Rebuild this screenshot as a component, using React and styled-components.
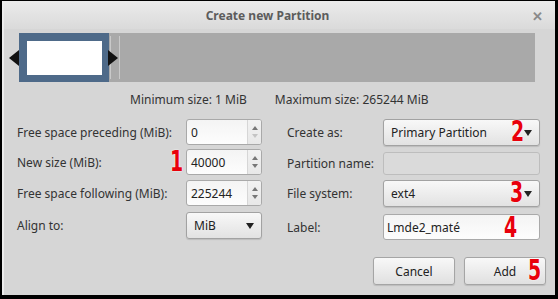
import React from "react";
import styled, { createGlobalStyle } from "styled-components";

const Global = createGlobalStyle`
  html, body { margin: 0; padding: 0; background: #000; }
  body { width: 558px; height: 299px; overflow: hidden; font-family: "Noto Sans", "Open Sans", sans-serif; }
`;

const Frame = styled.div`
  width: 558px;
  height: 299px;
  box-sizing: border-box;
  padding: 1px 3px 4px 2px;
  background: #000;
`;

const Dialog = styled.div`
  height: 100%;
  box-sizing: border-box;
  background: #d6d6d6;
  border-left: 2px solid #ececec;
  display: flex;
  flex-direction: column;
  position: relative;
`;

const TitleBar = styled.div`
  height: 28px;
  flex: none;
  box-sizing: border-box;
  padding-right: 24px;
  background: linear-gradient(#ebebeb, #dadada);
  display: flex;
  align-items: center;
  justify-content: center;
  font-size: 12px;
  font-weight: bold;
  color: #5c5c5c;
  position: relative;
`;

const Close = styled.span`
  position: absolute;
  right: 12px;
  top: 6px;
  font-size: 13px;
  color: #8a8a8a;
`;

const BarRow = styled.div`
  margin: 4px 0 0 5px;
  height: 49px;
  display: flex;
  align-items: stretch;
  position: relative;
`;

const Arrow = styled.div`
  width: 0;
  height: 0;
  align-self: center;
  border-top: 8px solid transparent;
  border-bottom: 8px solid transparent;
  ${(p) => (p.$dir === "left" ? "border-right: 10px solid #111;" : "border-left: 10px solid #111;")}
`;

const Selected = styled.div`
  width: 90px;
  box-sizing: border-box;
  background: #4e6a89;
  padding: 8px 7px 7px 8px;
  display: flex;
`;

const Inner = styled.div`
  flex: 1;
  background: #fff;
`;

const Free = styled.div`
  width: 426px;
  background: #a9a9a9;
  display: flex;
  position: relative;
`;

const Handle = styled.div`
  width: 10px;
  margin: 3px 0 3px 1px;
  border-left: 1px solid #c9c9c9;
  border-right: 1px solid #c9c9c9;
  box-sizing: border-box;
`;

const RightArrowWrap = styled.div`
  position: absolute;
  left: -1px;
  top: 0;
  bottom: 0;
  display: flex;
`;

const Sizes = styled.div`
  display: flex;
  margin: 9px 0 0 126px;
  gap: 28px;
  font-size: 12px;
  color: #333;
`;

const Form = styled.div`
  display: flex;
  margin-top: 11px;
`;

const Column = styled.div`
  display: grid;
  grid-template-columns: ${(p) => p.$cols};
  align-items: center;
  align-content: start;
  margin-left: ${(p) => p.$ml}px;
`;

const Label = styled.div`
  font-size: 12px;
  color: #333;
  margin-top: ${(p) => p.$mt || 0}px;
`;

const Cell = styled.div`
  margin-top: ${(p) => p.$mt || 0}px;
  position: relative;
`;

const Spin = styled.div`
  width: 76px;
  height: 26px;
  box-sizing: border-box;
  border: 1px solid #a9a9a9;
  border-radius: 3px;
  background: linear-gradient(#f4f4f4, #fdfdfd);
  display: flex;
  align-items: center;
  font-size: 12px;
  color: #222;
  padding-left: 4px;
`;

const SpinText = styled.span`
  flex: 1;
`;

const SpinBtns = styled.div`
  width: 13px;
  align-self: stretch;
  display: flex;
  flex-direction: column;
  align-items: center;
  justify-content: center;
  gap: 4px;
  border-left: 1px solid #d6d6d6;
  background: linear-gradient(#f2f2f2, #e8e8e8);
  border-radius: 0 2px 2px 0;
`;

const Tri = styled.div`
  width: 0;
  height: 0;
  border-left: 3px solid transparent;
  border-right: 3px solid transparent;
  ${(p) =>
    p.$up
      ? `border-bottom: 4px solid ${p.$off ? "#c4c4c4" : "#777"};`
      : `border-top: 4px solid ${p.$off ? "#c4c4c4" : "#777"};`}
`;

const Combo = styled.div`
  width: ${(p) => p.$w}px;
  height: 27px;
  box-sizing: border-box;
  border: 1px solid #a2a2a2;
  border-radius: 3px;
  background: linear-gradient(#f8f8f8, #e2e2e2);
  box-shadow: 0 1px 1px rgba(0,0,0,0.12);
  display: flex;
  align-items: center;
  padding: 0 7px 0 7px;
  font-size: 12px;
  color: #222;
`;

const ComboText = styled.span`
  flex: 1;
`;

const DownTri = styled.div`
  width: 0;
  height: 0;
  border-left: 4px solid transparent;
  border-right: 4px solid transparent;
  border-top: 6px solid #222;
`;

const Input = styled.div`
  width: 157px;
  height: ${(p) => p.$h}px;
  box-sizing: border-box;
  border: 1px solid ${(p) => (p.$disabled ? "#bdbdbd" : "#a9a9a9")};
  border-radius: 3px;
  background: ${(p) => (p.$disabled ? "#dadada" : "linear-gradient(#f4f4f4, #fdfdfd)")};
  display: flex;
  align-items: center;
  padding-left: 3px;
  font-size: 12px;
  color: #222;
`;

const Mark = styled.span`
  position: absolute;
  font-family: "DejaVu Sans Condensed", "DejaVu Sans", sans-serif;
  font-weight: bold;
  font-size: 28px;
  line-height: 1;
  color: #e8000b;
  transform: scaleX(0.75);
  transform-origin: left center;
  text-shadow: 0 0 1px #fff, 0 0 2px #fff;
  left: ${(p) => p.$x}px;
  top: ${(p) => p.$y}px;
`;

const Buttons = styled.div`
  display: flex;
  justify-content: flex-end;
  gap: 9px;
  margin: 17px 9px 0 0;
`;

const Button = styled.div`
  width: 82px;
  height: 28px;
  box-sizing: border-box;
  border: 1px solid #a5a5a5;
  border-radius: 3px;
  background: linear-gradient(#f8f8f8, #e0e0e0);
  box-shadow: 0 1px 1px rgba(0,0,0,0.12);
  display: flex;
  align-items: center;
  justify-content: center;
  font-size: 12px;
  color: #222;
  position: relative;
`;

function SpinBox({ value, upOff, downOff }) {
  return (
    <Spin>
      <SpinText>{value}</SpinText>
      <SpinBtns>
        <Tri $up $off={upOff} />
        <Tri $off={downOff} />
      </SpinBtns>
    </Spin>
  );
}

export default function App() {
  return (
    <>
      <Global />
      <Frame>
        <Dialog>
          <TitleBar>
            Create new Partition
            <Close>✕</Close>
          </TitleBar>
          <BarRow>
            <Arrow $dir="left" />
            <Selected>
              <Inner />
            </Selected>
            <Free>
              <Handle />
              <RightArrowWrap>
                <Arrow $dir="right" />
              </RightArrowWrap>
            </Free>
          </BarRow>
          <Sizes>
            <span>Minimum size: 1 MiB</span>
            <span>Maximum size: 265244 MiB</span>
          </Sizes>
          <Form>
            <Column $cols="169px 76px" $ml={13}>
              <Label>Free space preceding (MiB):</Label>
              <Cell>
                <SpinBox value="0" downOff />
              </Cell>
              <Label $mt={4}>New size (MiB):</Label>
              <Cell $mt={4}>
                <Mark $x={-16} $y={-1}>1</Mark>
                <SpinBox value="40000" />
              </Cell>
              <Label $mt={5}>Free space following (MiB):</Label>
              <Cell $mt={5}>
                <SpinBox value="225244" />
              </Cell>
              <Label $mt={6}>Align to:</Label>
              <Cell $mt={6}>
                <Combo $w={76}>
                  <ComboText>MiB</ComboText>
                  <DownTri />
                </Combo>
              </Cell>
            </Column>
            <Column $cols="96px 157px" $ml={25}>
              <Label>Create as:</Label>
              <Cell>
                <Combo $w={157}>
                  <ComboText>Primary Partition</ComboText>
                  <DownTri />
                </Combo>
                <Mark $x={128} $y={-1}>2</Mark>
              </Cell>
              <Label $mt={6}>Partition name:</Label>
              <Cell $mt={6}>
                <Input $disabled $h={23} />
              </Cell>
              <Label $mt={5}>File system:</Label>
              <Cell $mt={5}>
                <Combo $w={157}>
                  <ComboText>ext4</ComboText>
                  <DownTri />
                </Combo>
                <Mark $x={127} $y={-1}>3</Mark>
              </Cell>
              <Label $mt={7}>Label:</Label>
              <Cell $mt={7}>
                <Input $h={26}>Lmde2_maté</Input>
                <Mark $x={121} $y={0}>4</Mark>
              </Cell>
            </Column>
          </Form>
          <Buttons>
            <Button>Cancel</Button>
            <Button>
              Add
              <Mark $x={63} $y={-1}>5</Mark>
            </Button>
          </Buttons>
        </Dialog>
      </Frame>
    </>
  );
}
